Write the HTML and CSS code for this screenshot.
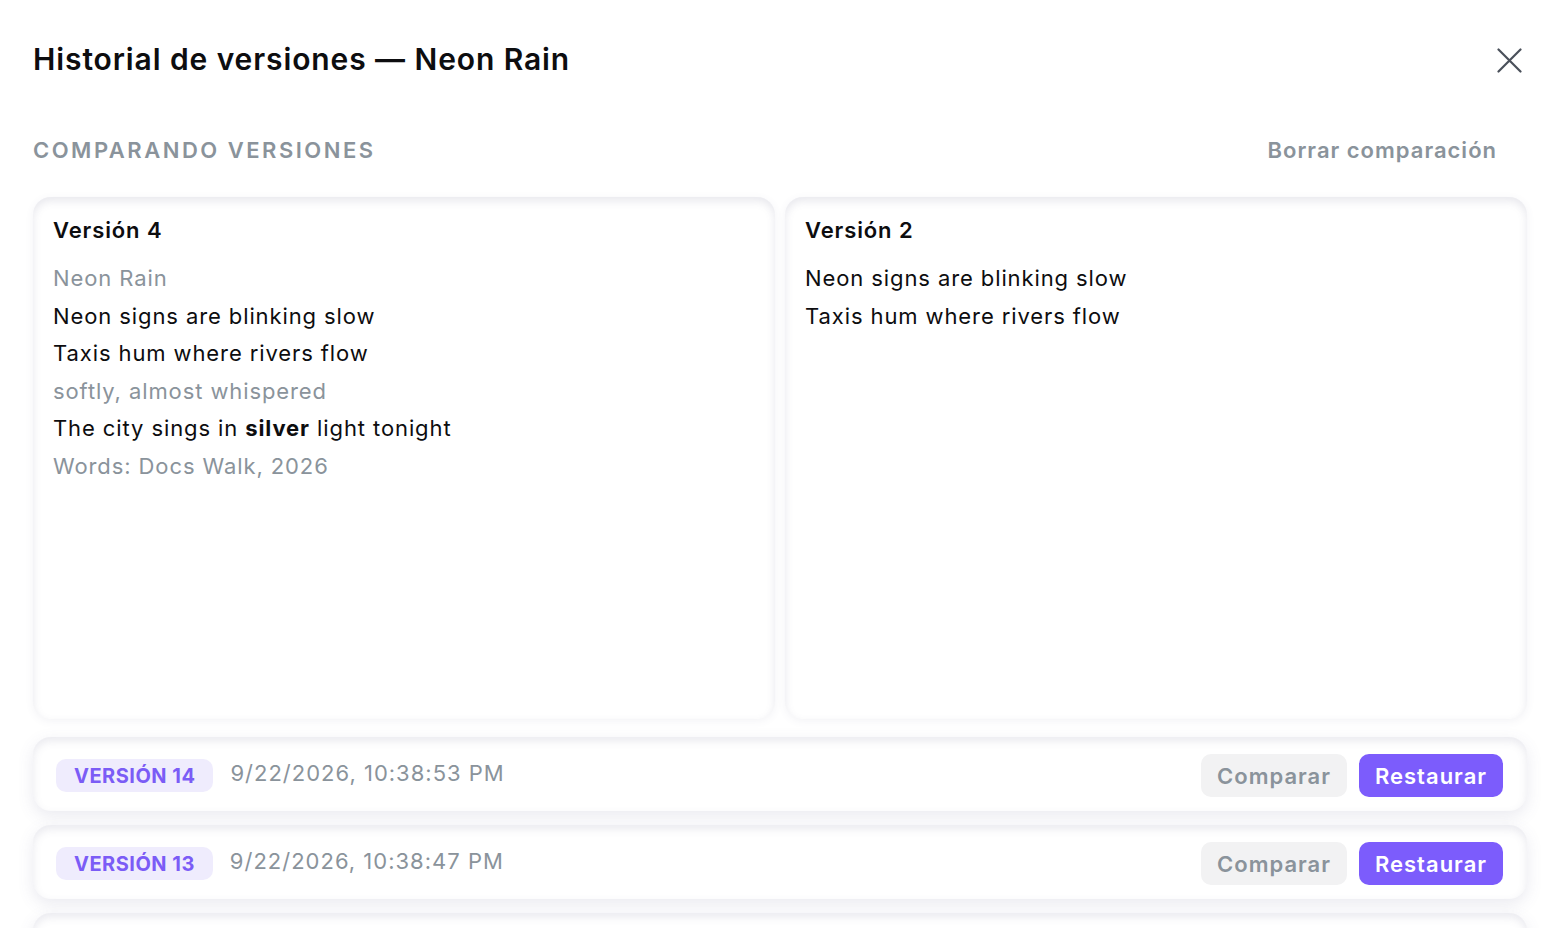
FILE: index.html
```html
<!DOCTYPE html>
<html lang="es">
<head>
    <meta charset="UTF-8">
    <title>Historial de versiones</title>
    <link rel="stylesheet" href="styles.css">
</head>
<body>

<div class="dialog">

    <div class="head">
        <h1>Historial de versiones — Neon Rain</h1>
        <button class="close" aria-label="Cerrar">
            <svg width="25" height="25" viewBox="0 0 25 25"><path d="M1.5 1.5 L23.5 23.5 M23.5 1.5 L1.5 23.5" stroke="#4a505a" stroke-width="2.2" stroke-linecap="round" fill="none"/></svg>
        </button>
    </div>

    <div class="compare-bar">
        <span class="compare-label">Comparando versiones</span>
        <button class="clear">Borrar comparación</button>
    </div>

    <div class="compare-grid">
        <div class="pane">
            <h3>Versión 4</h3>
            <p class="muted">Neon Rain</p>
            <p>Neon signs are blinking slow</p>
            <p>Taxis hum where rivers flow</p>
            <p class="muted">softly, almost whispered</p>
            <p>The city sings in <b>silver</b> light tonight</p>
            <p class="muted">Words: Docs Walk, 2026</p>
        </div>
        <div class="pane">
            <h3>Versión 2</h3>
            <p>Neon signs are blinking slow</p>
            <p>Taxis hum where rivers flow</p>
        </div>
    </div>

    <ul class="versions">
        <li class="row">
            <span class="badge">Versión 14</span>
            <span class="date">9/22/2026, 10:38:53 PM</span>
            <div class="actions">
                <button class="btn-compare">Comparar</button>
                <button class="btn-restore">Restaurar</button>
            </div>
        </li>
        <li class="row">
            <span class="badge">Versión 13</span>
            <span class="date">9/22/2026, 10:38:47 PM</span>
            <div class="actions">
                <button class="btn-compare">Comparar</button>
                <button class="btn-restore">Restaurar</button>
            </div>
        </li>
        <li class="row">
            <span class="badge">Versión 12</span>
            <span class="date">9/22/2026, 10:38:41 PM</span>
            <div class="actions">
                <button class="btn-compare">Comparar</button>
                <button class="btn-restore">Restaurar</button>
            </div>
        </li>
    </ul>

</div>

</body>
</html>
```

FILE: styles.css
```css
body {
    margin: 0;
    background: #fff;
    font-family: Inter, "Liberation Sans", sans-serif;
    color: #0d0d0f;
}

button {
    font-family: inherit;
    border: none;
    background: none;
    cursor: pointer;
    padding: 0;
}

.dialog {
    padding: 0 33px 0 33px;
}

.head {
    display: flex;
    align-items: center;
    justify-content: space-between;
    height: 118px;
}

.head h1 {
    margin: 0;
    font-size: 30px;
    font-weight: 600;
    letter-spacing: 0.9px;
}

.close {
    width: 25px;
    height: 25px;
    margin-right: 5px;
    margin-top: 2px;
}

.compare-bar {
    display: flex;
    align-items: center;
    justify-content: space-between;
    height: 64px;
    margin-bottom: 15px;
}

.compare-label {
    text-transform: uppercase;
    font-size: 22px;
    font-weight: 600;
    letter-spacing: 2.5px;
    color: #8a939b;
}

.clear {
    font-size: 22px;
    font-weight: 600;
    letter-spacing: 1px;
    color: #8a939b;
    margin-right: 30px;
}

.compare-grid {
    display: grid;
    grid-template-columns: 1fr 1fr;
    gap: 10px;
    height: 522px;
}

.pane {
    border-radius: 18px;
    padding: 18px 20px;
    background: #fff;
    box-shadow: inset 0 4px 9px rgba(90, 90, 130, 0.14), 0 2px 8px rgba(90, 90, 130, 0.07);
}

.pane h3 {
    margin: 0 0 15px;
    font-size: 22px;
    font-weight: 600;
    letter-spacing: 0.9px;
    line-height: 30px;
}

.pane p {
    margin: 0;
    font-size: 22px;
    letter-spacing: 0.9px;
    line-height: 37.6px;
}

.pane .muted {
    color: #8a939b;
}

.pane b {
    font-weight: 700;
}

.versions {
    list-style: none;
    margin: 18px 0 0;
    padding: 0;
    display: flex;
    flex-direction: column;
    gap: 14px;
}

.row {
    display: flex;
    align-items: center;
    height: 74px;
    padding: 0 24px 0 23px;
    border-radius: 18px;
    background: #fff;
    box-shadow: inset 0 4px 9px rgba(90, 90, 130, 0.13), 0 5px 16px rgba(90, 90, 140, 0.13);
}

.badge {
    text-transform: uppercase;
    font-size: 20px;
    font-weight: 700;
    letter-spacing: 0.5px;
    color: #7b5cf6;
    background: #efecfd;
    border-radius: 10px;
    padding: 5px 18px 4px;
    margin-top: 3px;
}

.date {
    margin-left: 17px;
    font-size: 22px;
    letter-spacing: 1px;
    color: #8a939b;
    margin-bottom: 2px;
}

.actions {
    margin-left: auto;
    display: flex;
    gap: 12px;
    margin-top: 3px;
}

.btn-compare, .btn-restore {
    font-size: 22px;
    font-weight: 600;
    letter-spacing: 1px;
    height: 43px;
    padding: 0 16px;
    border-radius: 10px;
}

.btn-compare {
    background: #f2f2f3;
    color: #8a939b;
}

.btn-restore {
    background: #7c5cfc;
    color: #fff;
}
```
